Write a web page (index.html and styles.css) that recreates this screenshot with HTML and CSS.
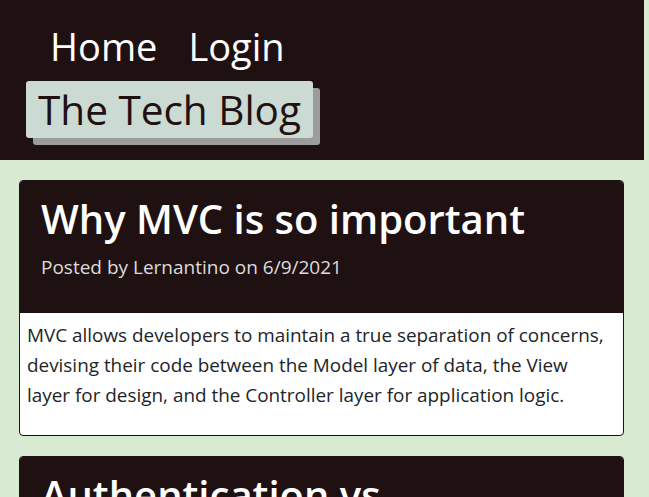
FILE: index.html
```html
<!DOCTYPE html>
<html>
<head>
<meta charset="utf-8">
<link rel="stylesheet" href="styles.css">
</head>
<body>
<header class="site-header">
  <nav class="nav">
    <a class="nav-link" href="#">Home</a>
    <a class="nav-link" href="#">Login</a>
  </nav>
  <h1 class="brand">The Tech Blog</h1>
</header>
<main class="posts">
  <article class="card">
    <div class="card-head">
      <h2 class="card-title">Why MVC is so important</h2>
      <p class="card-meta">Posted by Lernantino on 6/9/2021</p>
    </div>
    <div class="card-body">
      <p>MVC allows developers to maintain a true separation of concerns, devising their code between the Model layer of data, the View layer for design, and the Controller layer for application logic.</p>
    </div>
  </article>
  <article class="card">
    <div class="card-head">
      <h2 class="card-title">Authentication vs. Authorization</h2>
      <p class="card-meta">Posted by Lernantino on 6/9/2021</p>
    </div>
  </article>
</main>
</body>
</html>
```
FILE: styles.css
```css
html, body {
  margin: 0;
  padding: 0;
}
body {
  background: #d9ead3;
  font-family: "Open Sans", "Noto Sans", sans-serif;
  color: #212529;
  overflow: hidden;
}
.site-header {
  background: #1f1111;
  height: 160px;
  box-sizing: border-box;
  margin-right: 5px;
  padding: 22px 26px 0;
}
.nav {
  display: flex;
  gap: 31px;
  padding-left: 24px;
}
.nav-link {
  color: #fff;
  text-decoration: none;
  font-size: 38px;
  line-height: 48px;
}
.brand {
  display: inline-block;
  margin: 11px 0 0;
  background: #cbdad3;
  color: #1f1111;
  font-weight: 400;
  font-size: 40.5px;
  line-height: 57px;
  padding: 0 12px;
  border-radius: 3px;
  box-shadow: 7px 7px 0 #9c9c9c;
}
.posts {
  padding: 20px 25px 0 19px;
  display: flex;
  flex-direction: column;
  gap: 20px;
}
.card {
  border: 1px solid #1f1111;
  border-radius: 4px;
  background: #fff;
  overflow: hidden;
}
.card-head {
  background: #1f1111;
  color: #fff;
  padding: 12px 21px 32px;
}
.card-title {
  margin: 0;
  font-size: 40px;
  font-weight: 600;
  line-height: 52px;
}
.card-meta {
  margin: 8px 0 0;
  font-size: 19px;
  color: #dcdcdc;
  line-height: 28px;
}
.card-body {
  padding: 7px 18px 25px 7px;
}
.card-body p {
  margin: 0;
  font-size: 18.9px;
  line-height: 30px;
  color: #212529;
}
```
